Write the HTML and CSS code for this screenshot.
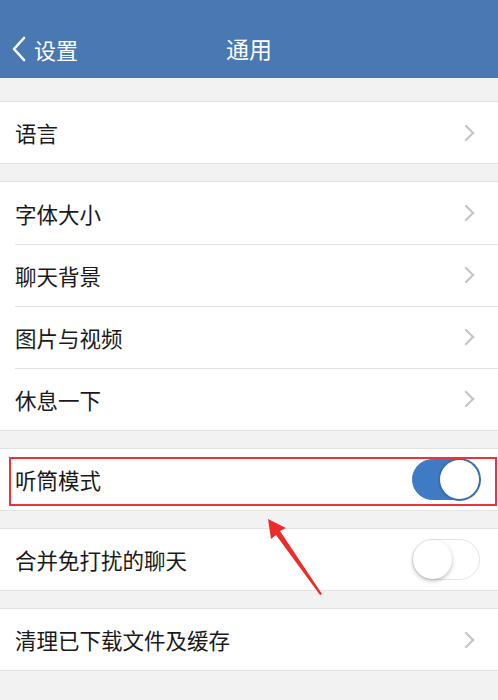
FILE: index.html
```html
<!DOCTYPE html>
<html lang="zh">
  <head>
    <meta charset="UTF-8" />
    <meta name="viewport" content="width=device-width, initial-scale=1.0" />
    <title>通用</title>
    <link rel="stylesheet" href="styles.css">
  </head>
  <body>
    <div class="navbar">
      <div class="back">
        <svg class="back-icon" width="18" height="26" viewBox="0 0 18 26">
          <path d="M14 2 L4 13 L14 24" fill="none" stroke="#fff" stroke-width="2.6" stroke-linecap="round" stroke-linejoin="round" />
        </svg>
        <span>设置</span>
      </div>
      <div class="title">通用</div>
    </div>

    <div class="group first">
      <div class="row"><span>语言</span><span class="arrow"></span></div>
    </div>

    <div class="group tall">
      <div class="row"><span>字体大小</span><span class="arrow"></span></div>
      <div class="row"><span>聊天背景</span><span class="arrow"></span></div>
      <div class="row"><span>图片与视频</span><span class="arrow"></span></div>
      <div class="row"><span>休息一下</span><span class="arrow"></span></div>
    </div>

    <div class="group">
      <div class="row highlight">
        <span>听筒模式</span>
        <span class="switch on"><span class="knob"></span></span>
      </div>
    </div>

    <div class="group">
      <div class="row">
        <span>合并免打扰的聊天</span>
        <span class="switch"><span class="knob"></span></span>
      </div>
    </div>

    <div class="group">
      <div class="row"><span>清理已下载文件及缓存</span><span class="arrow"></span></div>
    </div>

    <!-- 红色标注箭头 -->
    <svg class="pointer" width="70" height="80" viewBox="0 0 70 80">
      <polygon points="2,2 20,11 14,14 56,77 54,78 10,18 5,22" fill="#ee2b2b" />
    </svg>
  </body>
</html>
```

FILE: styles.css
```css
body {
  margin: 0;
  padding: 0;
  background: #f2f2f2;
  font-family: "Noto Sans CJK SC", "Noto Sans", sans-serif;
  color: #1a1a1a;
  position: relative;
  min-height: 700px;
}
.navbar {
  height: 78px;
  background: #4a78b2;
  color: white;
  position: relative;
  display: flex;
  align-items: center;
  justify-content: center;
}
.back {
  position: absolute;
  left: 10px;
  top: 36px;
  display: flex;
  align-items: center;
  font-size: 22px;
  line-height: 26px;
}
.back-icon {
  margin-right: 6px;
}
.title {
  font-size: 23px;
  margin-top: 18px;
}
.group {
  background: white;
  margin-top: 17px;
  border-top: 1px solid #e2e2e2;
  border-bottom: 1px solid #e2e2e2;
}
.group.first {
  margin-top: 23px;
}
.row {
  height: 61px;
  display: flex;
  align-items: center;
  justify-content: space-between;
  padding: 0 18px 0 15px;
  font-size: 21.5px;
  position: relative;
}
.group.tall .row {
  height: 62px;
}
.row + .row::before {
  content: "";
  position: absolute;
  top: 0;
  left: 15px;
  right: 0;
  border-top: 1px solid #e2e2e2;
}
.arrow {
  width: 10px;
  height: 10px;
  border-top: 2px solid #c4c4c8;
  border-right: 2px solid #c4c4c8;
  transform: rotate(45deg);
  margin-right: 8px;
}
.highlight::after {
  content: "";
  position: absolute;
  top: 8px;
  bottom: 4px;
  left: 9px;
  right: 1px;
  border: 2px solid #e8343c;
}
.switch {
  width: 68px;
  height: 41px;
  border-radius: 21px;
  background: white;
  border: 1px solid #e4e4e4;
  box-sizing: border-box;
  position: relative;
}
.switch .knob {
  position: absolute;
  top: 0;
  left: 0;
  width: 39px;
  height: 39px;
  border-radius: 50%;
  background: white;
  box-shadow: 0 2px 4px rgba(0, 0, 0, 0.25);
}
.switch.on {
  background: #3f7bc4;
  border-color: #3f7bc4;
}
.switch.on .knob {
  left: 27px;
  box-shadow: 0 0 0 2px #3a6ca8;
}
.pointer {
  position: absolute;
  left: 266px;
  top: 517px;
}
```
